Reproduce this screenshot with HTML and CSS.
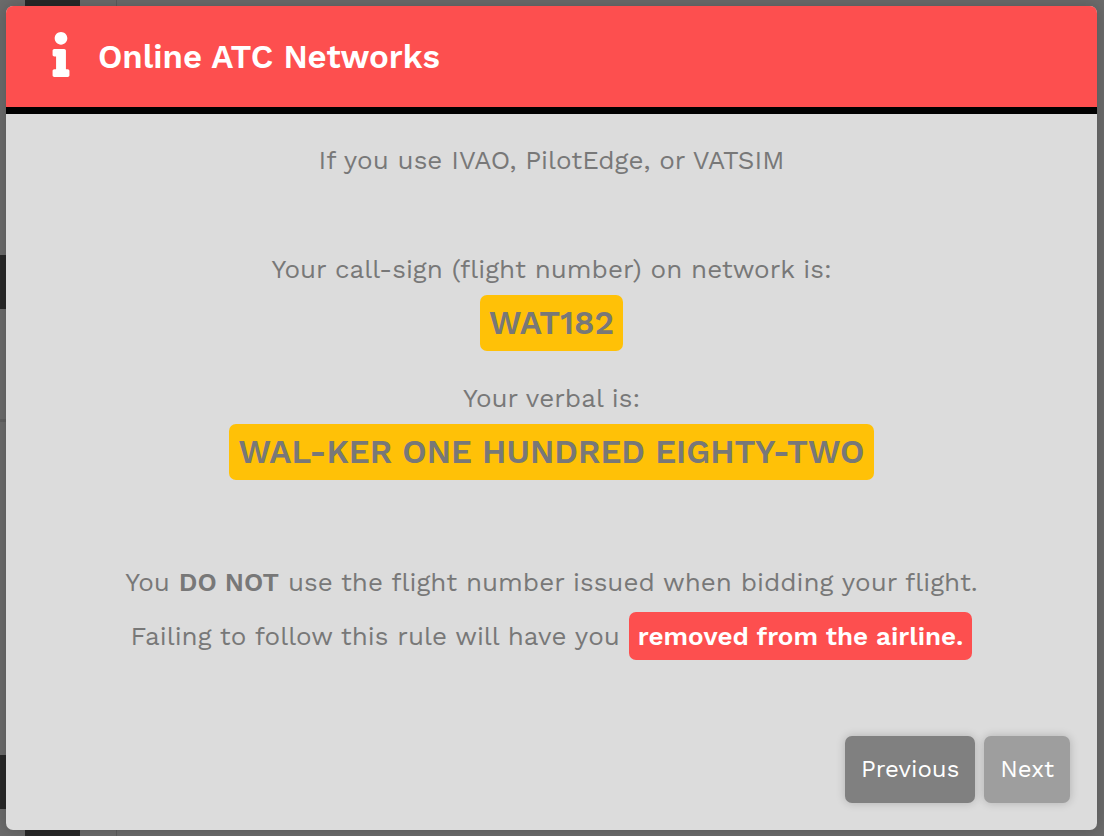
FILE: index.html
```
<!DOCTYPE html>
<html lang="en">
<head>
  <meta charset="UTF-8" />
  <meta name="viewport" content="width=device-width, initial-scale=1.0"/>
  <title>Online ATC Networks</title>
  <link rel="stylesheet" href="styles.css">
</head>
<body>

  <div class="modal" role="dialog" aria-labelledby="modal-title">
    <header class="modal-header">
      <svg class="info-icon" viewBox="0 0 192 512" aria-hidden="true">
        <path fill="currentColor" d="M20 424.229h20V279.771H20c-11.046 0-20-8.954-20-20V212c0-11.046 8.954-20 20-20h112c11.046 0 20 8.954 20 20v212.229h20c11.046 0 20 8.954 20 20V492c0 11.046-8.954 20-20 20H20c-11.046 0-20-8.954-20-20v-47.771c0-11.046 8.954-20 20-20zM96 0C56.235 0 24 32.235 24 72s32.235 72 72 72 72-32.235 72-72S135.764 0 96 0z"/>
      </svg>
      <h1 id="modal-title">Online ATC Networks</h1>
    </header>

    <main class="modal-body">
      <p class="intro">If you use IVAO, PilotEdge, or VATSIM</p>

      <section class="callsign">
        <p>Your call-sign (flight number) on network is:</p>
        <strong class="tag">WAT182</strong>
      </section>

      <section class="callsign">
        <p>Your verbal is:</p>
        <strong class="tag">WAL-KER ONE HUNDRED EIGHTY-TWO</strong>
      </section>

      <p class="rule">
        You <b>DO NOT</b> use the flight number issued when bidding your flight.<br>
        Failing to follow this rule will have you <strong class="warning">removed from the airline.</strong>
      </p>
    </main>

    <footer class="modal-footer">
      <button type="button" class="previous">Previous</button>
      <button type="button" class="next">Next</button>
    </footer>
  </div>

</body>
</html>
```
FILE: styles.css
```
* {
  box-sizing: border-box;
}
body {
  font-family: 'Work Sans', Inter, sans-serif;
  font-size: 26px;
  line-height: 32px;
  color: #787878;
  margin: 0;
  padding: 6px 7px 6px 6px;
  min-height: 100vh;
  display: flex;
  /* dimmed page behind the dialog */
  background-color: #6b6b6b;
  background-image:
    linear-gradient(#282828, #282828),
    linear-gradient(#282828, #282828),
    linear-gradient(#282828, #282828),
    linear-gradient(#606060, #606060),
    linear-gradient(#5c5c5c, #5c5c5c);
  background-size: 55px 100%, 6px 54px, 6px 54px, 6px 3px, 1px 100%;
  background-position: 25px 0, 0 255px, 0 755px, 0 419px, 116px 0;
  background-repeat: no-repeat;
}
.modal {
  flex: 1;
  display: flex;
  flex-direction: column;
  background: #dcdcdc;
  border-radius: 7px;
  overflow: hidden;
  box-shadow: 0 0 16px rgba(0,0,0,0.2);
}
.modal-header {
  display: flex;
  align-items: center;
  gap: 28px;
  padding: 26px 46px;
  background: #fd4f4f;
  color: white;
  border-bottom: 7px solid black;
}
.info-icon {
  width: 18px;
  height: 45px;
  margin-bottom: 4px;
}
h1 {
  margin: 0;
  font-size: 33px;
  line-height: 40px;
  font-weight: 600;
}
.modal-body {
  flex: 1;
  padding: 30px 24px 0;
  text-align: center;
}
p {
  margin: 0;
}
.intro {
  margin-bottom: 77px;
}
.callsign {
  margin-bottom: 31px;
}
.tag, .warning {
  display: inline-block;
  padding: 8px 9px;
  border-radius: 7px;
  font-weight: 600;
}
.tag {
  margin-top: 10px;
  background: #ffc107;
  font-size: 33px;
  line-height: 40px;
}
.rule {
  margin-top: 75px;
  line-height: 54px;
}
.rule b {
  font-weight: 600;
}
.warning {
  background: #fd4f4f;
  color: white;
  line-height: 32px;
}
.modal-footer {
  display: flex;
  justify-content: flex-end;
  gap: 9px;
  padding: 27px;
}
button {
  padding: 17px 16px;
  border: none;
  border-radius: 7px;
  color: white;
  font-family: inherit;
  font-size: 24px;
  line-height: 33px;
  cursor: pointer;
  box-shadow: 0 0 10px rgba(0,0,0,0.2);
}
.previous {
  background: #808080;
}
.next {
  background: #9e9e9e;
}
```
